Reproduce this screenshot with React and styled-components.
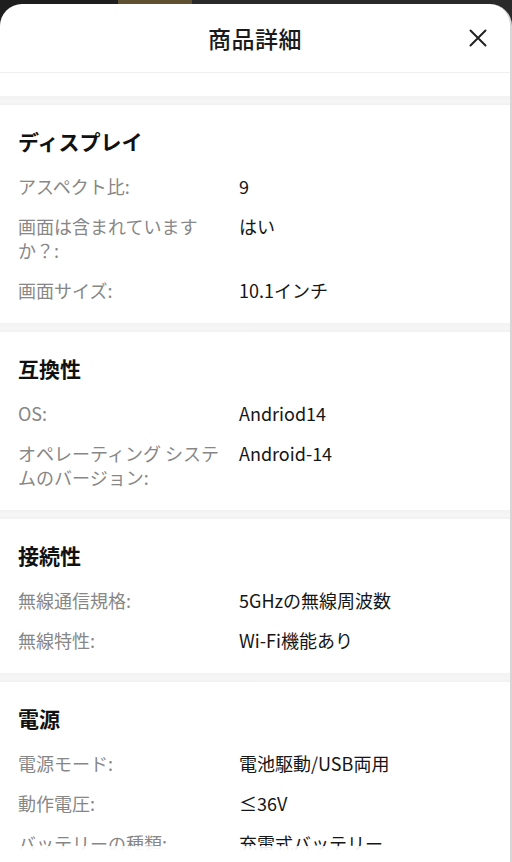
import React from 'react';
import styled, { createGlobalStyle } from 'styled-components';

const GlobalStyle = createGlobalStyle`
  html, body {
    margin: 0;
    padding: 0;
    background: #242424;
  }
  * {
    box-sizing: border-box;
  }
`;

const Backdrop = styled.div`
  height: 100vh;
  padding-top: 4px;
  background: linear-gradient(
    90deg,
    #1e1e1e 0,
    #1e1e1e 118px,
    #5e5030 118px,
    #5e5030 192px,
    #2a2a2a 192px
  );
  overflow: hidden;
`;

const Sheet = styled.div`
  position: relative;
  height: 100%;
  background: #fff;
  border-radius: 22px 22px 0 0;
  border-right: 2px solid #d6d6d6;
  overflow: hidden;
  font-family: "Noto Sans CJK JP", "Noto Sans", sans-serif;
`;

const BottomFade = styled.div`
  position: absolute;
  left: 0;
  right: 0;
  bottom: 0;
  height: 16px;
  background: linear-gradient(180deg, rgba(255, 255, 255, 0.85), #fff 30%);
`;

const Header = styled.header`
  position: relative;
  height: 69px;
  display: flex;
  align-items: center;
  justify-content: center;
  border-bottom: 1px solid #f0f0f0;
`;

const Title = styled.h1`
  margin: 0;
  font-size: 23px;
  font-weight: 500;
  color: #1a1a1a;
  letter-spacing: 0.5px;
`;

const CloseButton = styled.button`
  position: absolute;
  right: 20px;
  top: 50%;
  transform: translateY(-50%);
  width: 24px;
  height: 24px;
  padding: 0;
  border: none;
  background: none;
  display: flex;
  align-items: center;
  justify-content: center;
  cursor: pointer;
`;

const Spacer = styled.div`
  height: 23px;
`;

const Divider = styled.div`
  height: 9px;
  background: linear-gradient(180deg, #f2f2f2, #f6f6f6 60%, #f1f1f1);
`;

const Section = styled.section`
  padding: 22px 18px 21px;
`;

const SectionTitle = styled.h2`
  margin: 0 0 19px;
  font-size: 21px;
  line-height: 28px;
  font-weight: 700;
  color: #111;
`;

const Rows = styled.div`
  display: flex;
  flex-direction: column;
  gap: 16px;
`;

const Row = styled.div`
  display: grid;
  grid-template-columns: 210px 1fr;
  column-gap: 11px;
  font-size: 18px;
  line-height: 24px;
`;

const Label = styled.div`
  color: #878787;
`;

const Value = styled.div`
  color: #161616;
`;

const sections = [
  {
    title: 'ディスプレイ',
    rows: [
      ['アスペクト比:', '9'],
      ['画面は含まれていますか？:', 'はい'],
      ['画面サイズ:', '10.1インチ'],
    ],
  },
  {
    title: '互換性',
    rows: [
      ['OS:', 'Andriod14'],
      ['オペレーティング システムのバージョン:', 'Android-14'],
    ],
  },
  {
    title: '接続性',
    rows: [
      ['無線通信規格:', '5GHzの無線周波数'],
      ['無線特性:', 'Wi-Fi機能あり'],
    ],
  },
  {
    title: '電源',
    rows: [
      ['電源モード:', '電池駆動/USB両用'],
      ['動作電圧:', '≤36V'],
      ['バッテリーの種類:', '充電式バッテリー'],
    ],
  },
];

const CloseIcon = () => (
  <svg width="18" height="18" viewBox="0 0 18 18" fill="none">
    <path d="M1.5 1.5L16.5 16.5M16.5 1.5L1.5 16.5" stroke="#222" strokeWidth="2" strokeLinecap="round" />
  </svg>
);

export default function App() {
  return (
    <>
      <GlobalStyle />
      <Backdrop>
        <Sheet>
          <Header>
            <Title>商品詳細</Title>
            <CloseButton aria-label="閉じる">
              <CloseIcon />
            </CloseButton>
          </Header>
          <Spacer />
          {sections.map((s) => (
            <React.Fragment key={s.title}>
              <Divider />
              <Section>
                <SectionTitle>{s.title}</SectionTitle>
                <Rows>
                  {s.rows.map(([label, value]) => (
                    <Row key={label}>
                      <Label>{label}</Label>
                      <Value>{value}</Value>
                    </Row>
                  ))}
                </Rows>
              </Section>
            </React.Fragment>
          ))}
          <BottomFade />
        </Sheet>
      </Backdrop>
    </>
  );
}
